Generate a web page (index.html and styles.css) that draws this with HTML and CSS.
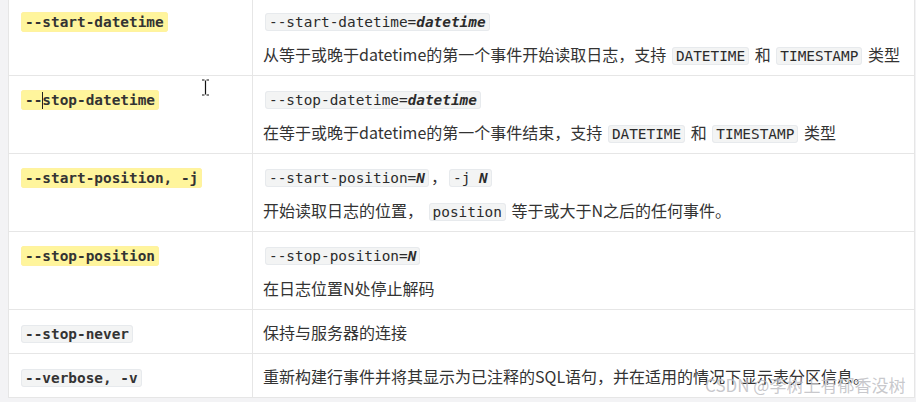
FILE: index.html
```html
<!DOCTYPE html>
<html lang="zh-CN">
<head>
<meta charset="utf-8">
<title>mysqlbinlog options</title>
<link rel="stylesheet" href="styles.css">
</head>
<body>
<div class="page">
  <table class="opts">
    <tbody>
      <tr>
        <td class="name"><div class="line"><code class="hl">--start-datetime</code></div></td>
        <td class="desc">
          <div class="line"><code>--start-datetime=<em>datetime</em></code></div>
          <div class="line">从等于或晚于datetime的第一个事件开始读取日志，支持 <code>DATETIME</code> 和 <code>TIMESTAMP</code> 类型</div>
        </td>
      </tr>
      <tr>
        <td class="name"><div class="line"><code class="hl">--<span class="caret"></span>stop-datetime</code></div></td>
        <td class="desc">
          <div class="line"><code>--stop-datetime=<em>datetime</em></code></div>
          <div class="line">在等于或晚于datetime的第一个事件结束，支持 <code>DATETIME</code> 和 <code>TIMESTAMP</code> 类型</div>
        </td>
      </tr>
      <tr>
        <td class="name"><div class="line"><code class="hl">--start-position, -j</code></div></td>
        <td class="desc">
          <div class="line"><code>--start-position=<em>N</em></code>，<code>-j <em>N</em></code></div>
          <div class="line">开始读取日志的位置， <code>position</code> 等于或大于N之后的任何事件。</div>
        </td>
      </tr>
      <tr>
        <td class="name"><div class="line"><code class="hl">--stop-position</code></div></td>
        <td class="desc">
          <div class="line"><code>--stop-position=<em>N</em></code></div>
          <div class="line">在日志位置N处停止解码</div>
        </td>
      </tr>
      <tr>
        <td class="name"><div class="line"><code>--stop-never</code></div></td>
        <td class="desc"><div class="line">保持与服务器的连接</div></td>
      </tr>
      <tr>
        <td class="name"><div class="line"><code>--verbose, -v</code></div></td>
        <td class="desc"><div class="line">重新构建行事件并将其显示为已注释的SQL语句，并在适用的情况下显示表分区信息。</div></td>
      </tr>
    </tbody>
  </table>
  <svg class="ibeam" width="9" height="17" viewBox="0 0 9 17" aria-hidden="true">
    <path d="M1 1h2.5M5.5 1H8M4.5 1.5v14M1 16h2.5M5.5 16H8" stroke="#fff" stroke-width="3" fill="none"/>
    <path d="M1 1h2.5M5.5 1H8M4.5 1.5v14M1 16h2.5M5.5 16H8" stroke="#111" stroke-width="1.2" fill="none"/>
  </svg>
  <div class="watermark">CSDN @李树上有郁香没树</div>
</div>
</body>
</html>
```

FILE: styles.css
```css
html, body {
  margin: 0;
  padding: 0;
}
body {
  background: #f3f3f5;
  width: 916px;
  height: 402px;
  overflow: hidden;
}
.page {
  position: relative;
  width: 916px;
  height: 402px;
  overflow: hidden;
}
.opts {
  margin: -3px 0 0 8px;
  width: 907px;
  border-collapse: collapse;
  background: #fff;
  table-layout: fixed;
  font-family: "Noto Sans CJK SC", "Noto Sans", sans-serif;
  font-size: 16px;
  color: #333;
}
.opts td {
  border: 1px solid #e6e6e6;
  padding: 10px 10px 9px 10px;
  vertical-align: top;
}
.opts td.name {
  width: 223px;
}
.line {
  height: 24px;
  line-height: 24px;
  white-space: nowrap;
}
.desc .line + .line {
  margin-top: 10px;
}
code {
  font-family: "DejaVu Sans Mono", "Liberation Mono", monospace;
  font-size: 14.4px;
  line-height: 18px;
  background: #f3f4f4;
  border: 1px solid #e7eaed;
  border-radius: 3px;
  padding: 0 3px;
  margin: 0 2px;
  color: #2b2b2b;
}
code em {
  font-weight: bold;
  font-style: italic;
}
.name code {
  font-weight: bold;
  color: #333;
}
code.hl {
  background: #fff59c;
  border-color: #fff2a0;
  padding: 1px 3px;
}
.caret {
  display: inline-block;
  width: 1px;
  height: 17px;
  background: #222;
  vertical-align: -4px;
  margin-right: -1px;
}
.ibeam {
  position: absolute;
  left: 201px;
  top: 79px;
}
.watermark {
  position: absolute;
  left: 705px;
  top: 374px;
  font-family: "Noto Sans CJK SC", sans-serif;
  font-size: 17px;
  line-height: 22px;
  color: rgba(190, 190, 195, 0.85);
  white-space: nowrap;
}
```
